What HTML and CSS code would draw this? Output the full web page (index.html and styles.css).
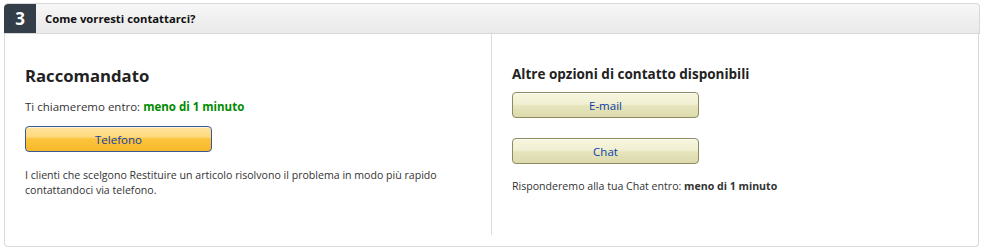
FILE: index.html
```html
<!DOCTYPE html>
<html lang="it">
<head>
<meta charset="utf-8">
<link rel="stylesheet" href="styles.css">
</head>
<body>
<div class="section">
  <div class="header">
    <div class="num">3</div>
    <div class="title">Come vorresti contattarci?</div>
  </div>
  <div class="content">
    <div class="col left">
      <h2 class="h-big">Raccomandato</h2>
      <p class="wait">Ti chiameremo entro: <b class="green">meno di 1 minuto</b></p>
      <button class="btn btn-primary">Telefono</button>
      <p class="note">I clienti che scelgono Restituire un articolo risolvono il problema in modo più rapido contattandoci via telefono.</p>
    </div>
    <div class="col right">
      <h3 class="h-small">Altre opzioni di contatto disponibili</h3>
      <button class="btn btn-secondary btn-mail">E-mail</button>
      <button class="btn btn-secondary btn-chat">Chat</button>
      <p class="wait2">Risponderemo alla tua Chat entro: <b>meno di 1 minuto</b></p>
    </div>
  </div>
</div>
</body>
</html>
```
FILE: styles.css
```css
* { box-sizing: border-box; }
html, body { margin: 0; padding: 0; background: #fff; }
body {
  font-family: "Open Sans", "Noto Sans", sans-serif;
  color: #333;
  padding: 3px 6px 0 4px;
}
.section { width: 976px; }
.header {
  display: flex;
  align-items: stretch;
  height: 31px;
  border: 1px solid #d9d9d9;
  border-left: none;
  border-radius: 4px 4px 0 0;
  background: linear-gradient(#f7f7f7, #e9e9e9);
  overflow: hidden;
}
.num {
  width: 32px;
  background: #343e48;
  color: #fff;
  font-weight: 700;
  font-size: 17px;
  display: flex;
  align-items: center;
  justify-content: center;
  border-radius: 4px 0 0 0;
}
.title {
  display: flex;
  align-items: center;
  padding-left: 9px;
  font-weight: 700;
  font-size: 11.3px;
  color: #111;
}
.content {
  display: flex;
  border: 1px solid #d9d9d9;
  border-top: none;
  border-radius: 0 0 4px 4px;
  height: 213px;
  width: 975px;
  padding-bottom: 11px;
}
.col { flex: 0 0 auto; }
.left {
  width: 487px;
  border-right: 1px solid #ddd;
  padding: 30px 0 0 20px;
}
.right { padding: 30px 0 0 20px; }
.h-big {
  margin: 0;
  font-size: 16.7px;
  font-weight: 700;
  color: #222;
  line-height: 24px;
}
.wait {
  margin: 11px 0 0;
  font-size: 11.5px;
  line-height: 16px;
}
.green { color: #008a00; }
.btn {
  display: block;
  width: 187px;
  height: 26px;
  border-radius: 4px;
  font-family: inherit;
  font-size: 11.5px;
  color: #0c3fa8;
  padding: 0;
  cursor: pointer;
}
.btn-primary {
  margin-top: 11px;
  border: 1px solid #3b5a94;
  background: linear-gradient(#ffe49e 0%, #fed97e 40%, #fcc43e 50%, #f7b92a 100%);
  box-shadow: inset 0 1px 0 rgba(255,255,255,0.6);
}
.btn-secondary {
  border: 1px solid #8e8a62;
  background: linear-gradient(#f6f6de 0%, #f1f0d3 45%, #e6e4bb 55%, #dcdaad 100%);
  box-shadow: inset 0 1px 0 rgba(255,255,255,0.7);
}
.note {
  margin: 16px 0 0;
  font-size: 10.6px;
  line-height: 15px;
  width: 450px;
}
.h-small {
  margin: 0;
  font-size: 13.5px;
  font-weight: 700;
  color: #222;
  line-height: 20px;
}
.btn-mail { margin-top: 8px; }
.btn-chat { margin-top: 20px; }
.wait2 {
  margin: 14px 0 0;
  font-size: 10.6px;
  line-height: 16px;
}
```
